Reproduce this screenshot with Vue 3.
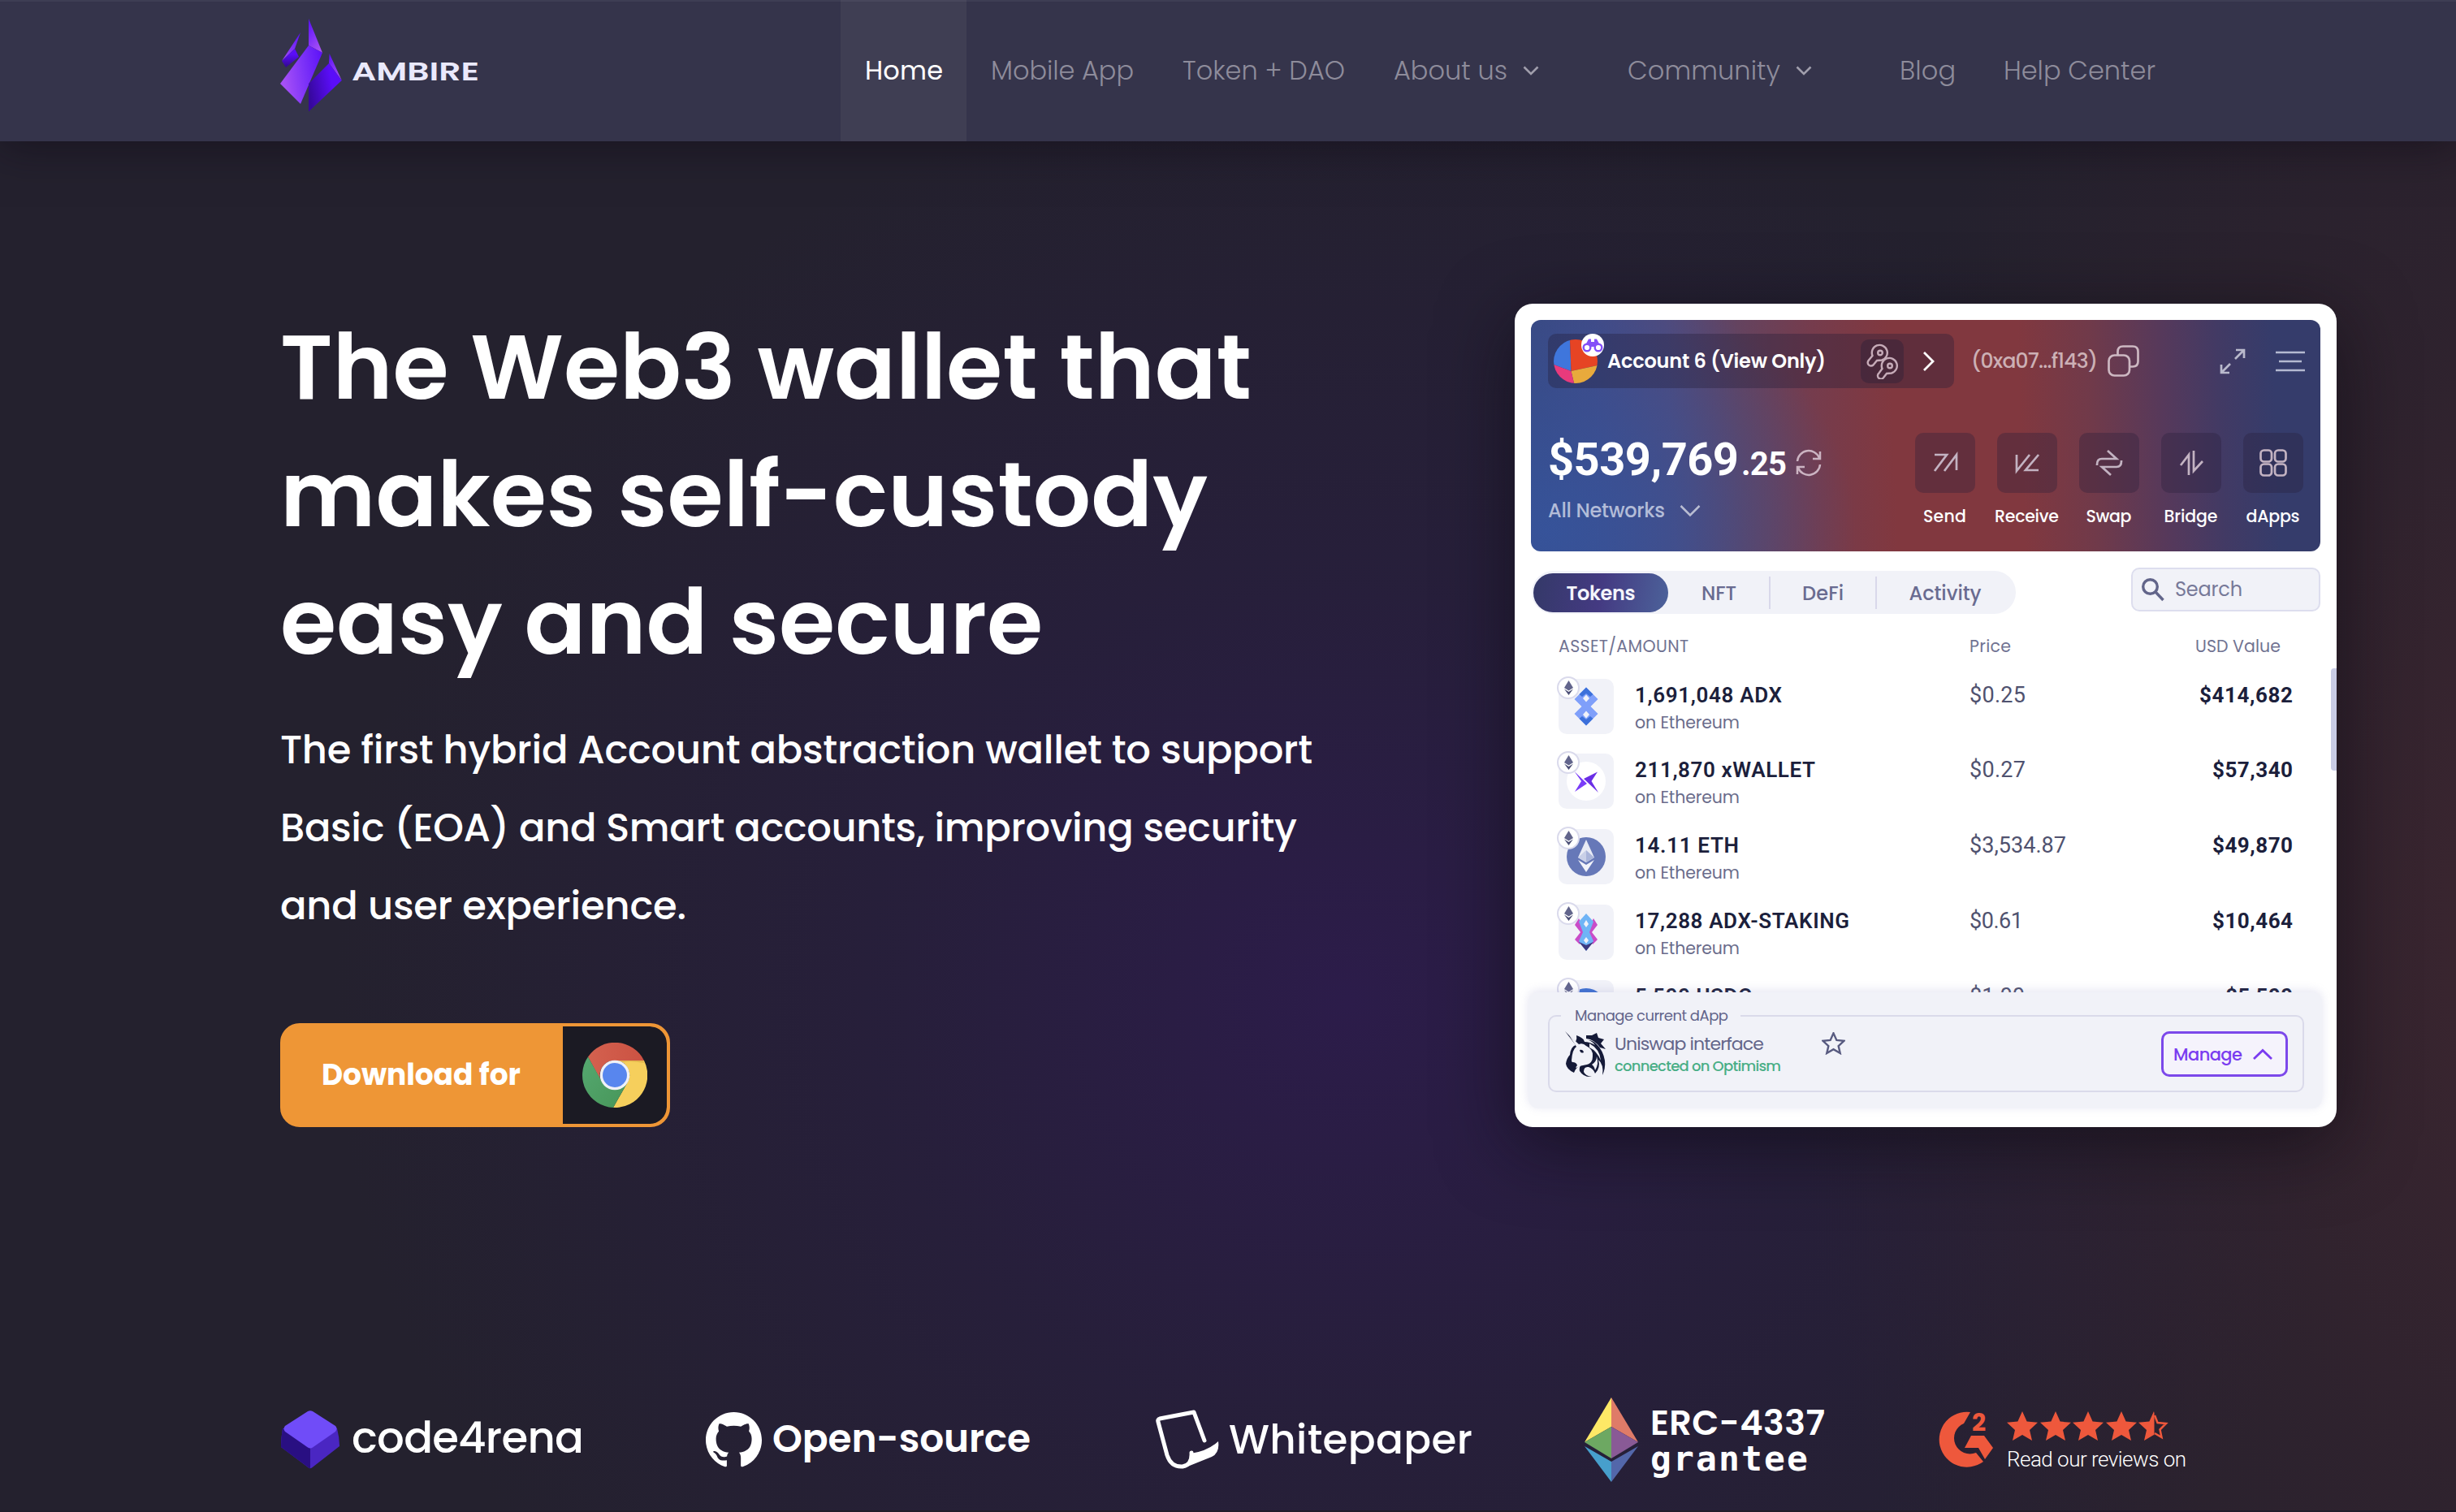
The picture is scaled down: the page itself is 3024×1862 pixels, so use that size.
<script setup>
// Adjusts tracking so a label fills the given width in pixels.
const vFit = {
  mounted(el, { value, modifiers }) {
    const natural = el.getBoundingClientRect().width
    if (modifiers.stretch) {
      el.style.transform = `scaleX(${value / natural})`
      return
    }
    const gaps = Math.max(1, el.textContent.trim().length - 1)
    const spacing = (value - natural) / gaps
    el.style.letterSpacing = `${spacing}px`
    el.style.marginRight = `${-spacing}px`
  },
}

const nav = [
  { label: 'Home', w: 96, active: true },
  { label: 'Mobile App', w: 176 },
  { label: 'Token + DAO', w: 200 },
  { label: 'About us', w: 140, menu: true },
  { label: 'Community', w: 188, menu: true },
  { label: 'Blog', w: 69 },
  { label: 'Help Center', w: 187 },
]

const headline = [
  { text: 'The Web3 wallet that', w: 1196 },
  { text: 'makes self-custody', w: 1142 },
  { text: 'easy and secure', w: 939 },
]
const intro = [
  { text: 'The first hybrid Account abstraction wallet to support', w: 1271 },
  { text: 'Basic (EOA) and Smart accounts, improving security', w: 1252 },
  { text: 'and user experience.', w: 500 },
]

const actions = [
  { label: 'Send', w: 53, paths: ['M4 7H19L4 27', 'M16 27L31 7V26'] },
  { label: 'Receive', w: 79, paths: ['M4 7V27L20 7', 'M31 7L15 26H31'] },
  { label: 'Swap', w: 56, paths: ['M15 2L26 12H8Q2 12 2 19V20', 'M19 32L8 22H26Q32 22 32 15V14'] },
  { label: 'Bridge', w: 66, paths: ['M4 20L14 7V32', 'M20 2V27L31 15'] },
  { label: 'dApps', w: 66, grid: true },
]

const tabs = [
  { label: 'Tokens', w: 85, active: true },
  { label: 'NFT', w: 43 },
  { label: 'DeFi', w: 51 },
  { label: 'Activity', w: 89 },
]

const tokens = [
  { name: '1,691,048 ADX', w: 181, price: '$0.25', pw: 69, usd: '$414,682', uw: 115, icon: 'adx' },
  { name: '211,870 xWALLET', w: 222, price: '$0.27', pw: 69, usd: '$57,340', uw: 99, icon: 'xwallet' },
  { name: '14.11 ETH', w: 128, price: '$3,534.87', pw: 119, usd: '$49,870', uw: 99, icon: 'eth' },
  { name: '17,288 ADX-STAKING', w: 264, price: '$0.61', pw: 66, usd: '$10,464', uw: 99, icon: 'staking' },
  { name: '5,500 USDC', w: 144, price: '$1.00', pw: 68, usd: '$5,500', uw: 83, icon: 'usdc' },
]
const STAR = '19,0 24.6,12.6 38,13.8 28,23 31,36 19,29 7,36 10,23 0,13.8 13.4,12.6'
</script>

<template>
  <div class="page">
    <header class="topbar">
      <div class="brand">
        <svg class="brand-mark" width="76" height="116" viewBox="345 22 76 116">
          <defs>
            <linearGradient id="gMain" x1="0" x2="1" y1=".2" y2="0">
              <stop offset="0" stop-color="#a650f6" /><stop offset=".5" stop-color="#7c32f8" /><stop offset="1" stop-color="#5a10f8" />
            </linearGradient>
            <linearGradient id="gTip" x1=".1" x2=".6" y1="0" y2="1">
              <stop offset="0" stop-color="#5a10f8" /><stop offset="1" stop-color="#a650f6" />
            </linearGradient>
            <linearGradient id="gTipL" x1="1" x2="0" y1="0" y2="1">
              <stop offset="0" stop-color="#5a10f8" /><stop offset="1" stop-color="#a650f6" />
            </linearGradient>
            <linearGradient id="gDark" x1="0" x2=".7" y1=".6" y2=".4">
              <stop offset="0" stop-color="#36089c" /><stop offset="1" stop-color="#5a0df8" />
            </linearGradient>
            <linearGradient id="gDarkS" x1=".5" x2=".5" y1="0" y2="1">
              <stop offset=".3" stop-color="#5a0df8" /><stop offset="1" stop-color="#30088c" />
            </linearGradient>
          </defs>
          <path d="M380 23L397 65L380 56Z" fill="url(#gTip)" />
          <path d="M370 40L347 75L363 60Z" fill="url(#gTipL)" />
          <path d="M363 60L368 70L352 83L347 75Z" fill="url(#gDarkS)" />
          <path d="M380 56L397 65L370 128L345 103Z" fill="url(#gMain)" />
          <path d="M405.6 66L420.8 99L405 78Z" fill="url(#gTip)" />
          <path d="M405 78L420.8 99L380 137.5V103Z" fill="url(#gDark)" />
        </svg>
        <span class="brand-name" v-fit.stretch="157">AMBIRE</span>
      </div>
      <nav class="nav">
        <a v-for="n in nav" :key="n.label" :class="['nav-item', { active: n.active }]">
          <span v-fit="n.w">{{ n.label }}</span>
          <svg v-if="n.menu" width="20" height="12" viewBox="0 0 20 12"><path d="M1.5 1.5L10 10L18.5 1.5" /></svg>
        </a>
      </nav>
    </header>

    <main class="hero">
      <section class="pitch">
        <h1><span v-for="l in headline" :key="l.text" class="line"><span v-fit="l.w">{{ l.text }}</span></span></h1>
        <p><span v-for="l in intro" :key="l.text" class="line"><span v-fit="l.w">{{ l.text }}</span></span></p>
        <a class="download">
          <span class="download-label"><span v-fit="245">Download for</span></span>
          <span class="download-icon">
            <svg width="80" height="80" viewBox="0 0 80 80">
              <defs>
                <linearGradient id="cr" x1="0" x2="1"><stop offset="0" stop-color="#d4614f" /><stop offset="1" stop-color="#cb5242" /></linearGradient>
                <linearGradient id="cg" x1="0" x2="1" y1="0" y2="1"><stop offset="0" stop-color="#55a870" /><stop offset="1" stop-color="#479659" /></linearGradient>
              </defs>
              <path d="M7 17.500A40 40 0 0 1 76 22H40A18 18 0 0 0 22.500 46Z" fill="url(#cr)" />
              <path d="M76 22A40 40 0 0 1 38 80L55 50A18 18 0 0 0 40 22Z" fill="#f6cf5c" />
              <path d="M38 80A40 40 0 0 1 7 17.500L23 46A20 20 0 0 0 55 50Z" fill="url(#cg)" />
              <path d="M40 22H75.500L76 25Q60 22 50 24Z" fill="#d9a845" opacity=".6" />
              <circle cx="40" cy="40" r="18.300" fill="#f0f1f6" /><circle cx="40" cy="40" r="15" fill="#5886ee" />
            </svg>
          </span>
        </a>
      </section>

      <section class="wallet">
        <div class="panel">
          <div class="account-row">
            <div class="account">
              <div class="avatar">
                <svg width="54" height="54" viewBox="0 0 54 54">
                  <clipPath id="av"><circle cx="27" cy="27" r="27" /></clipPath>
                  <g clip-path="url(#av)">
                    <path d="M0 0H20L21.5 39L0 31Z" fill="#3f76dc" /><path d="M20 0H54V32L21.5 39Z" fill="#e64424" />
                    <path d="M54 32V54H25L21.5 39Z" fill="#e8aa3c" /><path d="M0 31L21.5 39L25 54H0Z" fill="#e83a7c" />
                  </g>
                </svg>
                <span class="avatar-badge">
                  <svg width="26" height="18" viewBox="0 0 26 18" fill="none" stroke="#8450f8" stroke-width="2.4">
                    <path d="M8 1.5H11V5H15V1.5H18L23 11H3Z" fill="#8450f8" stroke="none" />
                    <circle cx="6" cy="12" r="4.3" fill="#fff" /><circle cx="20" cy="12" r="4.3" fill="#fff" />
                  </svg>
                </span>
              </div>
              <span class="account-name"><span v-fit="269">Account 6 (View Only)</span></span>
              <span class="keys">
                <svg width="40" height="44" viewBox="0 0 40 44" fill="none" stroke="#c6abb8" stroke-width="2.4">
                  <path d="M7.500 15A9.500 9.500 0 1 1 19 20.500L13 21L8.500 26.500A4 4 0 1 1 3 20.500Z" /><circle cx="17" cy="11.500" r="2.800" />
                  <path d="M19.500 31A9.500 9.500 0 1 1 31 36.500L25 37L21.500 41.500A4 4 0 1 1 15.500 36.500Z" /><circle cx="29" cy="27.500" r="2.800" />
                </svg>
              </span>
              <svg class="account-next" width="16" height="26" viewBox="0 0 16 26"><path d="M2 2L13 13L2 24" /></svg>
            </div>
            <span class="address"><span v-fit="156">(0xa07...f143)</span></span>
            <svg class="copy" width="39" height="39" viewBox="0 0 39 39"><rect x="1.500" y="12.500" width="25.500" height="25" rx="7" /><path d="M12.500 12V8Q12.500 1.500 19 1.500H31Q37.500 1.500 37.500 8V20Q37.500 26.500 31 26.500H27.500" /></svg>
            <svg class="expand" width="32" height="32" viewBox="0 0 32 32"><path d="M19 13L30 2M20 2H30V12M13 19L2 30M2 20V30H12" /></svg>
            <svg class="burger" width="36" height="26" viewBox="0 0 36 26"><path d="M0 2H36M4 13H32M0 24H36" /></svg>
          </div>
          <div class="balance-row">
            <div class="balance">
              <div class="amount">
                <span class="whole" v-fit="235">$539,769</span><span class="cents" v-fit="56">.25</span>
                <svg width="34" height="34" viewBox="0 0 34 34"><path d="M3 15A14 14 0 0 1 30 11M31 3V12H22M31 19A14 14 0 0 1 4 23M3 31V22H12" /></svg>
              </div>
              <div class="networks">
                <span v-fit="144">All Networks</span>
                <svg width="26" height="16" viewBox="0 0 26 16"><path d="M1.500 2L13 13.500L24.500 2" /></svg>
              </div>
            </div>
            <div class="actions">
              <div v-for="a in actions" :key="a.label" class="action">
                <span class="action-icon">
                  <svg width="34" height="34" viewBox="0 0 34 34">
                    <template v-if="a.grid">
                      <rect x="1.500" y="1.500" width="13.500" height="14" rx="4" /><rect x="19" y="1.500" width="13.500" height="14" rx="4" />
                      <rect x="1.500" y="18.500" width="13.500" height="14" rx="4" /><rect x="19" y="18.500" width="13.500" height="14" rx="4" />
                    </template>
                    <path v-for="p in a.paths" :key="p" :d="p" />
                  </svg>
                </span>
                <span class="action-label"><span v-fit="a.w">{{ a.label }}</span></span>
              </div>
            </div>
          </div>
        </div>

        <div class="toolbar">
          <div class="tabs">
            <span v-for="t in tabs" :key="t.label" :class="['tab', { on: t.active }]"><span v-fit="t.w">{{ t.label }}</span></span>
          </div>
          <div class="search">
            <svg width="28" height="29" viewBox="0 0 28 29"><circle cx="10.500" cy="10.500" r="8.800" /><path d="M17 17L26.500 27" /></svg>
            <span v-fit="83">Search</span>
          </div>
        </div>

        <div class="columns">
          <span class="c-asset"><span v-fit="160">ASSET/AMOUNT</span></span>
          <span class="c-price"><span v-fit="51">Price</span></span>
          <span class="c-usd"><span v-fit="105">USD Value</span></span>
        </div>

        <div class="list">
          <div v-for="t in tokens" :key="t.name" class="row">
            <div class="tile">
              <svg width="68" height="68" viewBox="0 0 68 68">
                <g v-if="t.icon === 'adx'">
                  <path d="M34 10.500L48.500 25L39.500 34L48.500 43L34 57.500L19.500 43L28.500 34L19.500 25Z" fill="#7f9ffa" />
                  <path d="M34 10.500L42.500 19L39 22L34 18L29 22L25.500 19ZM34 57.500L42.500 49L39 46L34 50L29 46L25.500 49Z" fill="#3c70da" />
                  <path d="M34 19.500L38 24L34 28.500L30 24ZM34 39.500L38 44L34 48.500L30 44Z" fill="#f1f2f8" />
                </g>
                <g v-else-if="t.icon === 'xwallet'">
                  <circle cx="34" cy="34" r="24" fill="#fff" />
                  <path d="M19.500 22L35 37L20 47L28 34Z" fill="#7a3cf8" /><path d="M48 22.500L40.500 34L49 48L31 31Z" fill="#6a2ee6" />
                </g>
                <g v-else-if="t.icon === 'eth'">
                  <circle cx="34" cy="34" r="24" fill="#6678b8" />
                  <path d="M34 13L44 35L34 41L24 35Z" fill="#e8ebf5" /><path d="M34 26L44 35L34 41Z" fill="#aab5da" /><path d="M34 26L24 35L34 41Z" fill="#c9d0e8" />
                  <path d="M24 38L34 44L44 38L34 53Z" fill="#f1f3fa" />
                </g>
                <g v-else-if="t.icon === 'staking'">
                  <path d="M25 17L20 25L27 34L20 43L26 49L34 34ZM43 17L48 25L41 34L48 43L42 49L34 34Z" fill="#c94cc8" />
                  <path d="M34 11L43 21L38 34L43 45L34 57L25 45L30 34L25 21Z" fill="#6fb4f6" />
                  <path d="M34 57L25 46L34 50L43 46Z" fill="#3d3a80" />
                  <path d="M34 19L37 24L34 28L31 24ZM34 40L37 44L34 48L31 44Z" fill="#f1f2f8" />
                </g>
                <circle v-else cx="34" cy="34" r="24" fill="#3c70d2" />
              </svg>
              <span class="chain"><svg width="11" height="18" viewBox="0 0 11 18"><path d="M5.500 0L11 9L5.500 12.500L0 9Z" fill="#62658c" /><path d="M5.500 18L0 10.500L5.500 14L11 10.500Z" fill="#4c4f76" /></svg></span>
            </div>
            <div class="asset">
              <span class="asset-name"><span v-fit="t.w">{{ t.name }}</span></span>
              <span class="asset-chain"><span v-fit="129">on Ethereum</span></span>
            </div>
            <span class="price"><span v-fit="t.pw">{{ t.price }}</span></span>
            <span class="usd"><span v-fit="t.uw">{{ t.usd }}</span></span>
          </div>
        </div>

        <div class="dock">
          <div class="dapp">
            <span class="legend"><span v-fit="189">Manage current dApp</span></span>
            <svg class="unicorn" width="53" height="57" viewBox="0 0 53 57">
              <path d="M1 0L14 13Q16 9 15 5Q23 8 25 12Q33 9 40 16Q48 24 50 36Q51 46 47 54Q49 41 42 35Q45 45 38 52Q36 46 30 44Q24 43 24 50Q26 55 34 56Q24 57 19 49Q18 44 21 41Q14 45 12 51Q3 47 2 40Q3 33 7 29Q8 19 14 17Z" fill="#151a38" />
              <path d="M6 5L18 16Q23 14 27 18Q36 22 35 31Q35 39 28 41Q20 42 15 45Q10 41 9 36Q10 22 15 19Z" fill="#f1f2f8" />
              <path d="M31 15Q44 22 45 36Q40 24 31 20ZM34 41Q40 37 40 31Q43 40 38 48Q37 43 34 41ZM24 10Q33 10 38 17Q31 13 25 13Z" fill="#f1f2f8" />
              <path d="M27 5H34L40 2L42 8L49 10L45 15L51 22L44 20Q37 10 27 9Z" fill="#151a38" />
              <path d="M19 23Q23 22 24 26Q20 28 19 23ZM10 38Q15 38 16 42L12 47Q5 45 5 40Z" fill="#151a38" />
            </svg>
            <div class="dapp-text">
              <span class="dapp-name"><span v-fit="184">Uniswap interface</span></span>
              <span class="dapp-net"><span v-fit="205">connected on Optimism</span></span>
            </div>
            <svg class="star" width="29" height="28" viewBox="-2 -2 42 41"><polygon :points="STAR" /></svg>
            <a class="manage"><span v-fit="85">Manage</span><svg width="26" height="15" viewBox="0 0 26 15"><path d="M2 13L13 2.500L24 13" /></svg></a>
          </div>
        </div>
        <span class="scroll"></span>
      </section>
    </main>

    <footer class="partners">
      <div class="partner code">
        <svg width="72" height="72" viewBox="0 0 72 72">
          <path d="M2 22Q0 34 0 45L34 70.500Q36 72 38 70.500L72 44Q72 34 69 22Z" fill="#4a26c2" /><path d="M2 22Q0 34 0 45L34 70.500L36 71.500V40Z" fill="#290f82" />
          <path d="M33 1Q36 -.5 39 1L67 19Q70 22 67 26L39 45.500Q36 47.500 33 45.500L5 26Q2 22.500 5 19Z" fill="#704cf8" />
        </svg>
        <span v-fit="286">code4rena</span>
      </div>
      <div class="partner github">
        <svg width="69" height="68" viewBox="0 0 16 15.750"><path fill="#fff" d="M8 0C3.580 0 0 3.580 0 8c0 3.540 2.290 6.530 5.470 7.590.4.070.55-.17.55-.38 0-.19-.01-.82-.01-1.490-2.010.37-2.530-.49-2.690-.94-.09-.23-.48-.94-.82-1.130-.28-.15-.68-.52-.01-.53.63-.01 1.080.58 1.230.82.72 1.210 1.870.87 2.330.66.070-.52.28-.87.51-1.070-1.780-.2-3.640-.89-3.640-3.950 0-.87.31-1.590.82-2.150-.08-.2-.36-1.020.08-2.120 0 0 .67-.21 2.200.82.64-.18 1.320-.27 2-.27.68 0 1.360.09 2 .27 1.530-1.040 2.200-.82 2.200-.82.44 1.100.16 1.920.08 2.120.51.56.82 1.270.82 2.150 0 3.070-1.870 3.750-3.650 3.950.29.25.54.73.54 1.480 0 1.070-.01 1.930-.01 2.200 0 .21.15.46.55.38A8.010 8.010 0 0 0 16 8c0-4.420-3.580-8-8-8Z" /></svg>
        <span v-fit="318">Open-source</span>
      </div>
      <div class="partner paper">
        <svg width="78" height="73" viewBox="0 0 78 73">
          <path d="M60 38L47 3L5 11Q2 12 3 15L14 56Q19 71 33 70Q45 68 44 53" fill="none" stroke="#fff" stroke-width="5" stroke-linecap="round" stroke-linejoin="round" />
          <path d="M77 39Q79 53 69 58L33 72.500Q46 67 43 54Q64 51 77 39Z" fill="#fff" />
        </svg>
        <span v-fit="300">Whitepaper</span>
      </div>
      <div class="partner erc">
        <svg width="66" height="104" viewBox="0 0 66 104">
          <path d="M33 0L0 55L33 36Z" fill="#fde866" /><path d="M33 0L66 55L33 36Z" fill="#df7b68" />
          <path d="M0 55L33 36V75Z" fill="#6da862" /><path d="M66 55L33 36V75Z" fill="#895a96" />
          <path d="M0 60L33 79V104Z" fill="#479fcc" /><path d="M66 60L33 79V104Z" fill="#5367aa" />
        </svg>
        <div class="erc-text"><span class="erc-name"><span v-fit="215">ERC-4337</span></span><span class="grantee"><span v-fit="194">grantee</span></span></div>
      </div>
      <div class="partner g2">
        <svg width="71" height="69" viewBox="0 0 71 69">
          <path d="M42 1L34 15A19.500 19.500 0 1 0 49 51L58 62A34 34 0 1 1 42 1Z" fill="#ee583c" />
          <path d="M43 30H59L70 45L60 59L52 45H35Z" fill="#ee583c" />
          <text x="44" y="24" font-size="30" fill="#ee583c">2</text>
        </svg>
        <div class="reviews">
          <div class="stars">
            <svg v-for="i in 4" :key="i" width="38" height="36" viewBox="0 0 38 36"><polygon :points="STAR" fill="#ee583c" /></svg>
            <svg width="38" height="36" viewBox="0 0 38 36">
              <clipPath id="half"><rect width="19.500" height="36" /></clipPath>
              <polygon :points="STAR" fill="#ee583c" clip-path="url(#half)" />
              <path d="M20 5L23.500 14L34 15L26.500 22.500L28.500 32L20 27" fill="none" stroke="#ee583c" stroke-width="2.500" />
            </svg>
          </div>
          <span class="review-text"><span v-fit="221">Read our reviews on</span></span>
        </div>
      </div>
    </footer>
  </div>
</template>

<style>
body { background: #24212e; }
</style>

<style scoped>
.page {
  box-sizing: border-box;
  width: 3024px;
  height: 1862px;
  overflow: hidden;
  display: flex;
  flex-direction: column;
  font-family: Poppins, Inter, "Noto Sans", sans-serif;
  color: #fff;
  border-bottom: 2px solid #1f1b29;
  background:
    radial-gradient(ellipse 1000px 1500px at 3200px 1150px, rgba(72, 40, 48, .72), rgba(62, 37, 46, .4) 50%, rgba(50, 33, 46, 0)),
    radial-gradient(ellipse 1250px 1150px at 1660px 1230px, #2c1c4a, rgba(40, 30, 64, .7) 45%, rgba(37, 34, 47, 0)),
    #24212e;
}
.page *, .page *::before { box-sizing: border-box; }
span { display: inline-block; white-space: nowrap; }
svg { display: block; flex: none; }
.line { display: block; }
h1, p { margin: 0; }

.topbar {
  position: relative;
  height: 174px;
  flex: none;
  display: flex;
  justify-content: space-between;
  padding: 0 338px 0 345px;
  background: #35344b;
  box-shadow: 0 6px 50px rgba(14, 10, 20, .55), inset 0 2px #3e3e54;
}
.brand { display: flex; padding-top: 22px; }
.brand-name { margin: 51px 0 0 12px; height: 30px; line-height: 31px; font-size: 31px; font-weight: 600; color: #eae9fc; transform-origin: left; }
.nav { display: grid; grid-template-columns: 155px 236px 260px 288px 335px 128px 249px; }
.nav-item { display: flex; align-items: center; padding: 0 0 1px 30px; font-size: 32px; font-weight: 300; color: #8e8c9b; }
.nav-item svg { margin-left: 19px; }
.nav-item path { fill: none; stroke: #a09eac; stroke-width: 2.600; }
.nav-item.active { background: #3f3e53; box-shadow: inset 0 2px #48475c; color: #fff; font-weight: 400; }

.hero { display: flex; justify-content: space-between; height: 1214px; flex: none; padding: 199px 147px 0 345px; }
h1 { font-size: 112px; line-height: 157px; font-weight: 600; height: 471px; }
p { margin-top: 32px; height: 288px; font-size: 48px; line-height: 96px; font-weight: 500; }
.download { display: flex; margin-top: 96px; width: 480px; height: 128px; border: 4px solid #ee9636; border-radius: 24px; background: #ee9636; overflow: hidden; }
.download-label { flex: 1; padding-left: 47px; font-size: 36px; line-height: 119px; font-weight: 700; }
.download-icon { display: flex; align-items: center; justify-content: center; width: 128px; border-radius: 0 21px 21px 0; background: #1b1a23; }

.wallet {
  position: relative;
  margin-top: 1px;
  width: 1012px;
  height: 1014px;
  padding-top: 20px;
  border-radius: 22px;
  background: #fff;
  color: #6a6c8f;
  box-shadow: 0 20px 90px rgba(12, 8, 16, .6);
}
.panel {
  margin: 0 20px;
  height: 285px;
  border-radius: 12px;
  padding: 17px 8px 0 21px;
  color: #fff;
  background:
    radial-gradient(ellipse 380px 320px at 20px 260px, rgba(54, 84, 156, .9) 0, rgba(54, 82, 152, .55) 45%, rgba(54, 82, 152, 0)),
    linear-gradient(88deg, #384880 0, #414a86 9%, #504a7c 18%, #64435f 27%, #753c4d 36%, #81383f 46%, #81383f 62%, #703a4a 71%, #56395b 80%, #423a64 87%, #353c6b 94%, #353c6b);
}
.account-row { display: flex; align-items: center; height: 67px; padding-right: 10px; }
.account { display: flex; align-items: center; width: 500px; height: 67px; border-radius: 10px; background: rgba(35, 28, 55, .35); }
.avatar { position: relative; margin-left: 7px; }
.avatar-badge { position: absolute; left: 34px; top: -7px; display: flex; align-items: center; justify-content: center; width: 28px; height: 28px; border-radius: 50%; background: #fff; }
.account-name { width: 311px; margin-left: 12px; font-size: 24px; line-height: 30px; font-weight: 600; }
.keys { display: flex; align-items: center; justify-content: center; width: 53px; height: 54px; border-radius: 10px; background: rgba(35, 28, 55, .35); margin-left: 1px; }
.account-next { margin-left: 23px; fill: none; stroke: #fff; stroke-width: 2.800; }
.address { width: 154px; margin-left: 21px; font-size: 25px; line-height: 30px; font-weight: 500; color: #ccb0b5; }
.copy, .expand, .burger { fill: none; stroke: #cdb8c2; stroke-width: 2.700; }
.copy { margin-left: 14px; }
.expand { margin-left: 99px; stroke: #b9b9cc; }
.burger { margin-left: 37px; stroke: #b4b9d0; }
.balance-row { display: flex; justify-content: space-between; }
.balance { padding-top: 58px; }
.amount { display: flex; align-items: baseline; height: 60px; font-family: Roboto, sans-serif; line-height: 60px; font-weight: 700; }
.whole { font-size: 56px; }
.cents { margin-left: 3px; font-size: 40px; }
.amount svg { align-self: center; margin: 8px 0 0 10px; fill: none; stroke: #cbb4c2; stroke-width: 2.500; }
.networks { display: flex; align-items: center; margin-top: 18px; font-size: 24px; line-height: 30px; font-weight: 500; color: #b3bcd8; }
.networks svg { margin-left: 18px; fill: none; stroke: #b9bdd2; stroke-width: 2.500; }
.actions { display: grid; grid-template-columns: repeat(5, 101px); padding-top: 55px; }
.action { display: flex; flex-direction: column; align-items: center; }
.action-icon { display: flex; align-items: center; justify-content: center; width: 74px; height: 74px; border-radius: 10px; background: rgba(38, 30, 58, .33); }
.action-icon svg { fill: none; stroke: #c3b3c2; stroke-width: 2.700; }
.action-label { margin-top: 15px; font-size: 20.500px; line-height: 28px; font-weight: 500; }

.toolbar { display: flex; justify-content: space-between; align-items: flex-start; padding: 20px 20px 0 21px; height: 78px; }
.tabs { display: grid; grid-template-columns: 166px 125px 131px 170px; margin-top: 4px; padding: 3px 2px; height: 53px; border-radius: 27px; background: #f1f2f8; }
.tab { position: relative; display: flex; align-items: center; justify-content: center; height: 48px; font-size: 24px; font-weight: 500; color: #696b90; }
.tab + .tab + .tab::before { content: ""; position: absolute; left: -1px; top: 4px; width: 2px; height: 40px; background: #d9d8ea; }
.tab.on { border-radius: 24px; color: #f4f4fb; font-weight: 600; background: linear-gradient(100deg, #343968, #443a82 50%, #4c629a); }
.search { display: flex; align-items: center; width: 233px; height: 54px; padding: 0 0 1px 11px; border: 2px solid #dddeee; border-radius: 10px; background: #f1f2f8; font-size: 24px; color: #777998; }
.search svg { margin: 1px 13px 0 0; fill: none; stroke: #62658a; stroke-width: 3.400; }

.columns { display: grid; grid-template-columns: 506px 200px 1fr; margin: 24.500px 69px 0 54px; font-size: 20.500px; line-height: 28px; color: #717392; }
.c-usd { text-align: right; }
.list { height: 392px; margin-top: 20px; padding-top: 6px; padding-left: 44px; overflow: hidden; }
.row { display: grid; grid-template-columns: 95px 411px 200px 1fr; height: 92.800px; padding: 0 54px 0 10px; }
.tile { position: relative; width: 68px; height: 68px; border-radius: 10px; background: #f1f2f8; }
.chain { position: absolute; left: -2px; top: -3px; display: flex; align-items: center; justify-content: center; width: 28px; height: 28px; border: 2px solid #dadaec; border-radius: 50%; background: #fff; }
.asset { display: flex; flex-direction: column; align-items: flex-start; padding-top: 5px; margin-left: -1px; }
.asset-name, .price, .usd { font-family: Roboto, sans-serif; line-height: 30px; }
.asset-name { font-size: 26px; font-weight: 600; color: #1c1f3c; }
.asset-chain { margin-top: 5px; font-size: 20.500px; line-height: 28px; color: #6a6c8b; }
.price { padding-top: 5px; font-size: 27px; color: #50526f; }
.usd { padding-top: 5px; font-size: 26px; font-weight: 700; text-align: right; color: #1c1f3c; }

.dock { position: relative; width: 977px; height: 143px; margin-left: 17px; padding: 28px 22px 0 24px; border-radius: 12px; background: #f1f2f8; box-shadow: 0 -2px 12px rgba(130, 130, 190, .22); }
.dapp { position: relative; display: flex; align-items: flex-start; height: 95px; padding: 18px 18px 0; border: 2px solid #dadaea; border-radius: 10px; }
.legend { position: absolute; left: 14px; top: -15px; padding: 0 15px 0 17px; background: #f1f2f8; font-size: 18px; line-height: 28px; color: #62648a; }
.dapp-text { display: flex; flex-direction: column; width: 245px; margin-left: 9px; }
.dapp-name { font-size: 22px; line-height: 26px; margin-top: 3px; color: #63658a; }
.dapp-net { font-size: 18px; line-height: 24px; margin-top: 2px; font-weight: 500; color: #49ae86; }
.star { margin-left: 10px; margin-top: 1px; fill: none; stroke: #585b80; stroke-width: 3.500; }
.manage { display: flex; align-items: center; width: 156px; height: 56px; margin-left: auto; padding: 2px 0 0 12px; border: 3px solid #7c48ea; border-radius: 10px; font-size: 21px; font-weight: 500; color: #7a3cf0; background: #f5f3fc; }
.manage svg { margin-left: 12px; fill: none; stroke: #7a3cf0; stroke-width: 2.800; }
.scroll { position: absolute; right: 0; top: 449px; width: 7px; height: 126px; border-radius: 4px 0 0 4px; background: #c9cce5; }

.partners { display: grid; grid-template-columns: 523px 554px 528px 434px 1fr; margin-top: 332px; padding-left: 346px; height: 106px; }
.partner { display: flex; }
.code svg { margin-top: 17px; }
.code > span { margin-left: 15px; font-size: 53px; font-weight: 500; line-height: 60px; height: 60px; margin-top: 21px; }
.github svg { margin-top: 19px; }
.github > span { margin-left: 13px; margin-top: 22px; height: 60px; line-height: 60px; font-size: 47px; font-weight: 600; }
.paper svg { margin-top: 16px; }
.paper > span { margin-left: 12px; margin-top: 23px; height: 60px; line-height: 60px; font-size: 50px; font-weight: 500; }
.erc svg { margin-top: 1px; }
.erc-text { display: flex; flex-direction: column; margin: 11px 0 0 15px; }
.erc-name { font-size: 43px; line-height: 42px; font-weight: 600; }
.grantee { margin-top: 2px; font-family: "DejaVu Sans Mono", monospace; font-size: 43px; line-height: 42px; font-weight: 700; }
.g2 { margin-left: -1px; }
.g2 svg { margin-top: 18px; }
.g2 text { font-weight: 700; }
.reviews { margin-left: 16px; }
.stars { display: flex; gap: 2.500px; padding-top: 18px; }
.stars svg { margin: 0; }
.review-text { display: block; margin-top: 8px; font-family: Roboto, sans-serif; font-size: 26px; line-height: 30px; font-weight: 300; }
</style>
